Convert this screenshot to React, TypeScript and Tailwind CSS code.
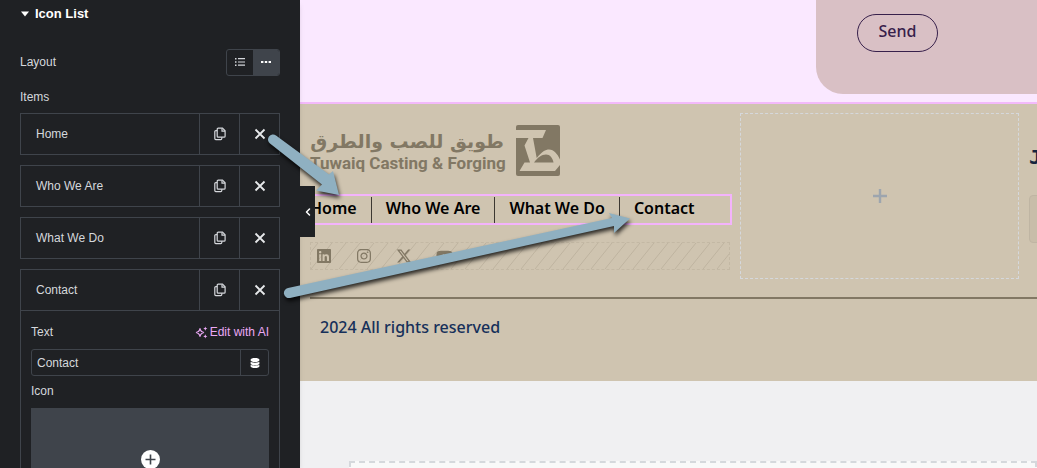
import React from "react";
import { ChevronLeft } from "lucide-react";
import { FaDatabase, FaInstagram, FaLinkedin, FaXTwitter, FaYoutube } from "react-icons/fa6";

const sans = "font-['Liberation_Sans',Arial,sans-serif]";
const menu = ["Home", "Who We Are", "What We Do", "Contact"];

function CopyIcon() {
  return (
    <svg width="14" height="14" viewBox="0 0 14 14" fill="none" stroke="currentColor" strokeWidth="1.2">
      <path d="M5.2 1.2h4.3l2.6 2.6v5.4a1 1 0 0 1-1 1H5.2a1 1 0 0 1-1-1v-7a1 1 0 0 1 1-1z" />
      <path d="M9 1.4v2.8h3" />
      <path d="M4.2 3.6H2.8a1 1 0 0 0-1 1v7a1 1 0 0 0 1 1h5a1 1 0 0 0 1-1v-1.4" />
    </svg>
  );
}

function CrossIcon() {
  return (
    <svg width="12" height="12" viewBox="0 0 12 12" stroke="currentColor" strokeWidth="1.8">
      <path d="M1.5 1.5l9 9M10.5 1.5l-9 9" />
    </svg>
  );
}

function SparkleIcon() {
  return (
    <svg width="13" height="13" viewBox="0 0 13 13" fill="none" stroke="currentColor" strokeWidth="1.2">
      <path d="M5 2.4c.4 2.4 1.6 3.7 4 4.1c-2.4.4-3.6 1.7-4 4.1c-.4-2.4-1.6-3.7-4-4.1c2.4-.4 3.6-1.7 4-4.1z" />
      <path fill="currentColor" stroke="none" d="M10.3 0.5l.6 1.5 1.5.6-1.5.6-.6 1.5-.6-1.5-1.500-.6 1.500-.6zM10.300 8.300l.6 1.500 1.500.6-1.500.6-.6 1.500-.6-1.500-1.500-.6 1.500-.6z" />
    </svg>
  );
}

function LogoMark() {
  return (
    <svg width="44" height="51" viewBox="0 0 44 51">
      <rect width="44" height="51" rx="2" fill="#827864" />
      <path
        fill="#cfc4b0"
        d="M0 5H30L26.500 13H17L20.700 33C26 26.500 29.500 24.500 33 24.500C38 24.500 41.500 29 44 34.500V40L39 46H3.500L8.500 37.500H14L8.500 20.500L12.500 13H0z"
      />
      <path fill="#827864" d="M18 37.500C21.500 32.500 25.500 29.500 30 29.500C34 29.500 36.500 33 37.500 37.500z" />
    </svg>
  );
}

function Sidebar() {
  return (
    <aside className="relative z-10 w-[300px] shrink-0 bg-[#1f2124] text-xs text-[#d5d8dc] shadow-md">
      <div className="h-full overflow-hidden px-5 pt-1">
        <h2 className="flex h-5 items-center gap-[5px] text-[13px] font-bold text-white">
          <svg width="10" height="6" viewBox="0 0 10 6"><path d="M1 .5h8L5 5.500z" fill="currentColor" /></svg>
          Icon List
        </h2>
        <div className="mt-6 flex h-7 items-center justify-between">
          <span>Layout</span>
          <div className="flex h-[27px] w-[54px] overflow-hidden rounded-[3px] border border-[#3f444b]">
            <button aria-label="Default" className="flex flex-1 items-center justify-center">
              <svg width="10" height="8" viewBox="0 0 10 8" fill="currentColor">
                <path d="M0 0h1.500v1.500H0zM3 .1h7v1.200H3zM0 3.200h1.500v1.500H0zM3 3.400h7v1.200H3zM0 6.400h1.500v1.500H0zM3 6.600h7v1.200H3z" />
              </svg>
            </button>
            <button aria-label="Inline" className="flex flex-1 items-center justify-center bg-[#3f444b] text-white">
              <svg width="10" height="2" viewBox="0 0 10 2" fill="currentColor"><path d="M0 0h2.400v2H0zM3.800 0h2.400v2H3.800zM7.600 0H10v2H7.600z" /></svg>
            </button>
          </div>
        </div>
        <div className="mt-3 h-[18px] leading-[18px]">Items</div>
        <div className="mt-[7px] flex flex-col gap-2.5">
          {menu.map((name, i) => (
            <div key={name} className="border border-[#3f444b]">
              <div className="flex h-10">
                <button className="flex-1 px-[15px] text-left">{name}</button>
                <button aria-label={"Duplicate " + name} className="flex w-10 items-center justify-center border-l border-[#3f444b]"><CopyIcon /></button>
                <button aria-label={"Remove " + name} className="flex w-10 items-center justify-center border-l border-[#3f444b] text-[#e6e8ea]"><CrossIcon /></button>
              </div>
              {i === 3 && (
                <div className="border-t border-[#3f444b] px-2.5 pt-[11px]">
                  <div className="flex h-5 items-center justify-between">
                    <label htmlFor="item-text">Text</label>
                    <button className="flex items-center gap-0.5 text-[#eba9f5]"><SparkleIcon />Edit with AI</button>
                  </div>
                  <div className="mt-[7px] flex h-[27px] overflow-hidden rounded-[3px] border border-[#3f444b]">
                    <input id="item-text" defaultValue="Contact" className="min-w-0 flex-1 bg-transparent px-[5px] outline-none" />
                    <button aria-label="Dynamic tags" className="flex w-7 items-center justify-center border-l border-[#3f444b] text-white"><FaDatabase size={10} /></button>
                  </div>
                  <div className="mt-[7px] h-4 leading-4">Icon</div>
                  <button aria-label="Choose icon" className="mt-[9px] flex h-[102px] w-full items-center justify-center bg-[#3f444b]">
                    <svg width="19" height="19" viewBox="0 0 19 19"><circle cx="9.500" cy="9.500" r="9.500" fill="#fff" /><path d="M9.500 4.500v10M4.500 9.500h10" stroke="#3f444b" strokeWidth="1.600" /></svg>
                  </button>
                </div>
              )}
            </div>
          ))}
        </div>
      </div>
      <button aria-label="Hide panel" className="absolute left-full top-[186px] flex h-[51px] w-[15px] items-center justify-center bg-[#1f2124] text-white">
        <ChevronLeft size={12} strokeWidth={3} />
      </button>
    </aside>
  );
}

function SocialBar() {
  return (
    <div className="relative mt-[19px] h-7 border border-dashed border-[#c3b8a4] text-[#827864]">
      <svg className="absolute inset-0 h-full w-full">
        <defs>
          <pattern id="hatch" width="14" height="26" patternUnits="userSpaceOnUse">
            <path d="M-14 26L7 0M0 26L21 0M-7 17.300L0 8.700M-28 26L-7 0" stroke="#beb39f" strokeWidth="1" />
          </pattern>
        </defs>
        <rect width="100%" height="100%" fill="url(#hatch)" />
      </svg>
      <div className="relative flex h-full items-center gap-6 px-[5px]">
        <a href="#linkedin" aria-label="LinkedIn"><FaLinkedin size={16} /></a>
        <a href="#instagram" aria-label="Instagram"><FaInstagram size={16} /></a>
        <a href="#x" aria-label="X"><FaXTwitter size={16} /></a>
        <a href="#youtube" aria-label="YouTube"><FaYoutube size={17} /></a>
      </div>
    </div>
  );
}

function Footer() {
  return (
    <footer className="h-[277px] bg-[#cfc4b0] pl-2.5">
      <div className="grid h-[195px] grid-cols-[minmax(0,420fr)_minmax(0,279fr)_8px] gap-x-2.5 border-b-2 border-[#827864] pt-[9px]">
        <div className="pt-3">
          <div className="flex h-[51px] gap-3">
            <div className="flex w-[194px] flex-col whitespace-nowrap pt-1 font-bold text-[#827864]">
              <div dir="rtl" className="font-['DejaVu_Sans',sans-serif] text-[19px] leading-6">طويق للصب والطرق</div>
              <div className="font-['Roboto',sans-serif] text-[17px] leading-5">Tuwaiq Casting &amp; Forging</div>
            </div>
            <LogoMark />
          </div>
          <nav className="mt-5 flex h-[27px] items-center outline-2 outline-[#f3b3fb]">
            {menu.map((name, i) => (
              <a key={name} href="#menu" className={"flex h-[26px] items-center whitespace-nowrap pb-1 text-base font-semibold text-black " + (i ? "border-l border-[#3c3832] px-3.5" : "pr-3.5")}>{name}</a>
            ))}
          </nav>
          <SocialBar />
        </div>
        <div className="flex h-[166px] items-center justify-center border border-dashed border-[#d5d8dc]">
          <button aria-label="Add widget">
            <svg width="14" height="14" viewBox="0 0 14 14" stroke="#9da5ae" strokeWidth="2.400"><path d="M7 0v14M0 7h14" /></svg>
          </button>
        </div>
        <div className="pt-[30px] text-[#16243f]">
          <div className="h-[52px] font-['DejaVu_Sans_Mono',monospace] text-xl font-bold">J</div>
          <div className="h-12 w-32 rounded-sm border border-[#bfb5a3] bg-[#c8bda9]" />
        </div>
      </div>
      <p className="pl-2.5 pt-4 text-base leading-6 font-medium text-[#16305a]">2024 All rights reserved</p>
    </footer>
  );
}

function Arrows() {
  return (
    <svg className="pointer-events-none absolute left-0 top-0 z-20 h-[468px] w-[700px] drop-shadow-[1px_3px_2px_rgba(0,0,0,0.8)]" viewBox="0 0 700 468" fill="#8fb0c1">
      <path d="M276 135.500L329 174.500L333 171L339 195L316 190.500L322 184.500L270 143.500A5 5 0 0 1 276 135.500z" />
      <path d="M288 288L612 218L609 213L630 218.500L614 233L614 226L290 298A5 5 0 0 1 288 288z" />
    </svg>
  );
}

export default function App() {
  return (
    <div className={"relative flex h-screen overflow-hidden " + sans}>
      <Sidebar />
      <main className="min-w-0 flex-1 overflow-hidden bg-[#f0f0f2] font-['Noto_Sans',sans-serif]">
        <section className="flex h-[104px] justify-end border-b-2 border-[#f3b9fb] bg-[#fae8ff]">
          <div className="h-[94px] w-[30%] rounded-bl-[27px] bg-[#d9c0c5] pl-[41px] pt-3.5">
            <button className="h-[38px] w-[81px] rounded-full border border-[#37204b] pb-1 text-base font-medium text-[#37204b]">Send</button>
          </div>
        </section>
        <Footer />
        <div className="ml-[49px] mt-20 h-40 border-2 border-dashed border-[#d5d8dc] bg-[#f9f9f9]" />
      </main>
      <Arrows />
    </div>
  );
}
